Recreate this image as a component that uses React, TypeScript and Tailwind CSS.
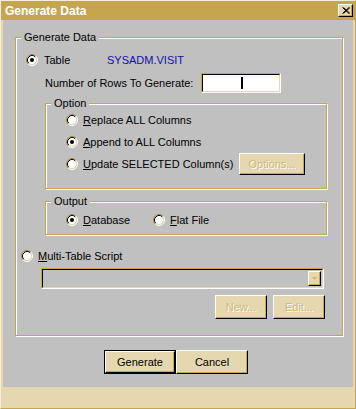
import type { ReactNode } from 'react';

// Kleiner Radio-Button im Stil der klassischen Windows-Dialoge
const Radio = ({ checked = false }: { checked?: boolean }) => (
    <svg width="12" height="12" viewBox="0 0 12 12" className="shrink-0">
        <circle cx="6" cy="6" r="4.5" fill="#ffffff" />
        <path d="M2.11 9.89 A5.5 5.5 0 0 1 9.89 2.11" fill="none" stroke="#a8893a" strokeWidth="1" />
        <path d="M9.89 2.11 A5.5 5.5 0 0 1 2.11 9.89" fill="none" stroke="#ffffff" strokeWidth="1" />
        <path d="M2.82 9.18 A4.5 4.5 0 0 1 9.18 2.82" fill="none" stroke="#000000" strokeWidth="1" />
        <path d="M9.18 2.82 A4.5 4.5 0 0 1 2.82 9.18" fill="none" stroke="#e5d8b0" strokeWidth="1" />
        {checked && <circle cx="6" cy="6" r="2" fill="#000000" />}
    </svg>
);

const Btn = ({
    children,
    disabled = false,
    isDefault = false,
    className = '',
}: {
    children: ReactNode;
    disabled?: boolean;
    isDefault?: boolean;
    className?: string;
}) => {
    const inner = (
        <div
            className={`w-full h-full flex items-center justify-center bg-[#e5d8b0] border border-t-white border-l-white border-r-black border-b-black shadow-[inset_-1px_-1px_0_#c6a54f] ${
                disabled ? 'text-[#cdb872] [text-shadow:1px_1px_0_#ffffff]' : 'text-black'
            }`}
        >
            {children}
        </div>
    );
    if (isDefault) {
        return <div className={`border border-black ${className}`}>{inner}</div>;
    }
    return <div className={className}>{inner}</div>;
};

const GroupBox = ({ label, className = '', children }: { label: string; className?: string; children?: ReactNode }) => (
    <div className={`relative border border-[#c6a54f] shadow-[inset_1px_1px_0_#ffffff,1px_1px_0_#ffffff] ${className}`}>
        <span className="absolute -top-[8px] left-[5px] px-[3px] bg-[#c0c0c0] leading-[14px]">{label}</span>
        {children}
    </div>
);

const App = () => {
    return (
        <div className="w-[356px] h-[409px] flex flex-col bg-[#e5d8b0] border border-t-[#f4eed8] border-l-[#f4eed8] border-r-[#c6a54f] border-b-[#c6a54f] font-['Liberation_Sans',Arial,sans-serif] text-[11px] text-black select-none">
            {/* Title Bar */}
            <div className="h-[19px] shrink-0 flex items-center bg-[#c6a54f] pl-[4px] pr-[2px]">
                <span className="text-white font-bold text-[12px]">Generate Data</span>
                <div className="ml-auto w-[15px] h-[13px] flex items-center justify-center bg-[#e5d8b0] border border-t-white border-l-white border-r-black border-b-black shadow-[inset_-1px_-1px_0_#c6a54f]">
                    <svg width="8" height="7" viewBox="0 0 8 7">
                        <path d="M0.5 0.5 L7 6.5 M1.5 0.5 L8 6.5 M7 0.5 L0.5 6.5 M8 0.5 L1.5 6.5" stroke="#000" strokeWidth="1" />
                    </svg>
                </div>
            </div>

            {/* Body */}
            <div className="flex-1 mx-[2px] bg-[#c0c0c0] flex flex-col pt-[17px] pl-[12px]">
                <GroupBox label="Generate Data" className="w-[328px] h-[299px] flex flex-col">
                    {/* Table */}
                    <div className="mt-[14px] h-[16px] pl-[10px] flex items-center gap-[6px]">
                        <Radio checked />
                        <span className="w-[57px]">Table</span>
                        <span className="text-[#1010a8]">SYSADM.VISIT</span>
                    </div>

                    {/* Number of rows */}
                    <div className="mt-[5px] h-[20px] pl-[29px] flex items-center">
                        <span className="w-[156px]">Number of Rows To Generate:</span>
                        <div className="w-[80px] h-[20px] border border-t-[#c6a54f] border-l-[#c6a54f] border-r-white border-b-white">
                            <div className="w-full h-full bg-white border border-t-black border-l-black border-r-[#e5d8b0] border-b-[#e5d8b0] flex items-center pl-[38px]">
                                <div className="w-[2px] h-[12px] bg-black" />
                            </div>
                        </div>
                    </div>

                    {/* Option */}
                    <GroupBox label="Option" className="mt-[10px] ml-[29px] w-[282px] h-[86px] flex flex-col pt-[5px] pl-[20px] pr-[21px]">
                        <div className="h-[22px] flex items-center gap-[5px]">
                            <Radio />
                            <span><u>R</u>eplace ALL Columns</span>
                        </div>
                        <div className="h-[22px] flex items-center gap-[5px]">
                            <Radio checked />
                            <span><u>A</u>ppend to ALL Columns</span>
                        </div>
                        <div className="h-[22px] flex items-center gap-[5px]">
                            <Radio />
                            <span><u>U</u>pdate SELECTED Column(s)</span>
                            <Btn disabled className="ml-auto w-[66px] h-[22px]">Options...</Btn>
                        </div>
                    </GroupBox>

                    {/* Output */}
                    <GroupBox label="Output" className="mt-[12px] ml-[29px] w-[282px] h-[34px] pt-[10px] pl-[20px]">
                        <div className="h-[16px] flex items-center">
                            <div className="w-[87px] flex items-center gap-[5px]">
                                <Radio checked />
                                <span><u>D</u>atabase</span>
                            </div>
                            <div className="flex items-center gap-[5px]">
                                <Radio />
                                <span><u>F</u>lat File</span>
                            </div>
                        </div>
                    </GroupBox>

                    {/* Multi-Table Script */}
                    <div className="mt-[13px] h-[16px] pl-[5px] flex items-center gap-[5px]">
                        <Radio />
                        <span><u>M</u>ulti-Table Script</span>
                    </div>

                    <div className="mt-[4px] ml-[25px] w-[283px] h-[21px] border border-t-[#c6a54f] border-l-[#c6a54f] border-r-white border-b-white">
                        <div className="w-full h-full bg-[#c0c0c0] border border-t-black border-l-black border-r-[#e5d8b0] border-b-[#e5d8b0] flex items-center justify-end pr-[1px]">
                            <div className="w-[13px] h-[15px] flex items-center justify-center bg-[#e5d8b0] border border-t-white border-l-white border-r-black border-b-black shadow-[inset_-1px_-1px_0_#c6a54f]">
                                <svg width="5" height="3" viewBox="0 0 5 3">
                                    <path d="M0 0 H5 L2.5 3 Z" fill="#cdb872" />
                                </svg>
                            </div>
                        </div>
                    </div>

                    <div className="mt-[6px] ml-[199px] flex gap-[6px]">
                        <Btn disabled className="w-[52px] h-[24px]">New...</Btn>
                        <Btn disabled className="w-[52px] h-[24px]">Edit...</Btn>
                    </div>
                </GroupBox>

                {/* Dialog buttons */}
                <div className="mt-[14px] pl-[89px] flex">
                    <Btn isDefault className="w-[72px] h-[24px]">Generate</Btn>
                    <Btn className="w-[72px] h-[24px]">Cancel</Btn>
                </div>
            </div>

            {/* Status strip */}
            <div className="h-[21px] shrink-0" />
        </div>
    );
};

export default App;
